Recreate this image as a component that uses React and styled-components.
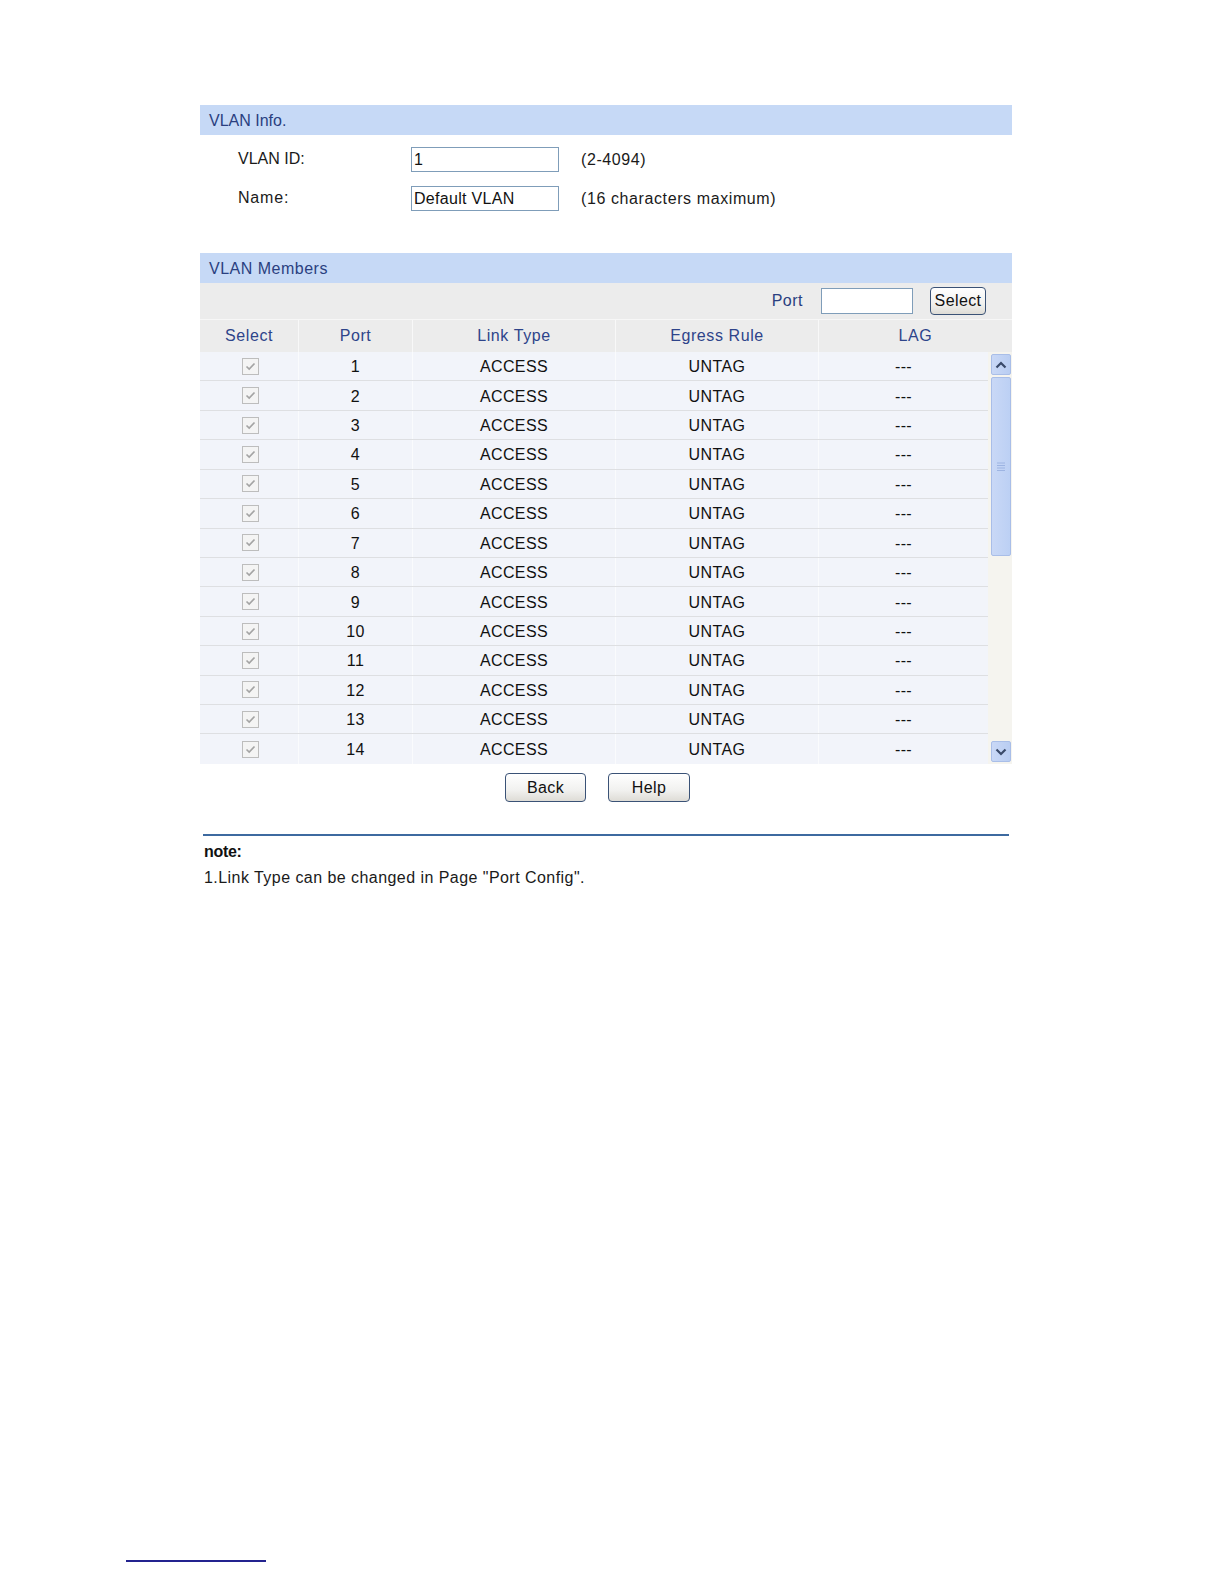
import styled, { createGlobalStyle } from 'styled-components'

const GlobalStyle = createGlobalStyle`
  html, body {
    margin: 0;
    padding: 0;
    background: #ffffff;
    font-family: "Liberation Sans", Arial, sans-serif;
  }
`

const Page = styled.div`
  padding-top: 105px;
  padding-bottom: 20px;
`

const Panel = styled.div`
  width: 812px;
  margin-left: 200px;
`

const SectionHeader = styled.div`
  height: 30px;
  line-height: 31px;
  padding-left: 9px;
  background: #c6d9f6;
  color: #2a3f80;
  font-size: 16px;
  letter-spacing: ${props => props.spacing || '0'};
`

const InfoForm = styled.div`
  padding: 5px 0 35px 38px;
`

const FormRow = styled.div`
  display: flex;
  align-items: center;
  height: 39px;
`

const Label = styled.div`
  width: 173px;
  font-size: 16px;
  color: #1a1a1a;
  margin-top: -2px;
  letter-spacing: ${props => props.spacing || '0'};
`

const TextBox = styled.div`
  box-sizing: border-box;
  width: ${props => props.width || '148px'};
  height: ${props => props.height || '25px'};
  border: 1px solid #7f9db9;
  background: #ffffff;
  font-size: 16px;
  line-height: 23px;
  padding-left: 2px;
  color: #111;
  letter-spacing: 0.3px;
`

const Hint = styled.div`
  margin-left: 22px;
  font-size: 16px;
  color: #1a1a1a;
  letter-spacing: 0.6px;
`

const Toolbar = styled.div`
  height: 36px;
  background: #ececec;
  display: flex;
  align-items: center;
  justify-content: flex-end;
  padding-right: 26px;
`

const ToolLabel = styled.div`
  font-size: 16px;
  color: #2a3f80;
  margin-right: 18px;
  letter-spacing: 0.5px;
`

const Button = styled.div`
  box-sizing: border-box;
  width: ${props => props.width};
  height: ${props => props.height || '29px'};
  border: 1px solid #3a5276;
  border-radius: 4px;
  background: linear-gradient(#ffffff, #f1f1ef 60%, #dedcd6);
  font-size: 16px;
  color: #111;
  letter-spacing: 0.4px;
  display: flex;
  align-items: center;
  justify-content: center;
  margin-left: ${props => props.gap || '0'};
`

const HeadRow = styled.div`
  display: grid;
  grid-template-columns: 99px 114px 203px 203px 193px;
  height: 33px;
  background: #ececec;
  border-top: 1px solid #f7f7f7;
  box-sizing: border-box;
`

const HeadCell = styled.div`
  display: flex;
  align-items: center;
  justify-content: center;
  font-size: 16px;
  color: #2e448a;
  letter-spacing: 0.6px;
  border-right: 1px solid #f8f8f8;
  &:last-child {
    border-right: none;
  }
`

const Body = styled.div`
  display: flex;
  height: 412px;
  overflow: hidden;
`

const Rows = styled.div`
  width: 788px;
`

const Row = styled.div`
  display: grid;
  grid-template-columns: 99px 114px 203px 203px 169px;
  height: 29.43px;
  box-sizing: border-box;
  background: #f2f4fa;
  border-bottom: 1px solid #dedfe2;
  &:last-child {
    border-bottom: none;
  }
`

const Cell = styled.div`
  display: flex;
  align-items: center;
  justify-content: center;
  font-size: 16px;
  color: #111;
  letter-spacing: 0.4px;
  padding-top: 2px;
  border-right: 1px solid #fafbfd;
  &:last-child {
    border-right: none;
  }
`

const CheckBox = styled.span`
  box-sizing: border-box;
  width: 17px;
  height: 17px;
  margin: -2px 0 0 2px;
  border: 1px solid #bdbdbd;
  background: #f4f4f4;
  display: flex;
  align-items: center;
  justify-content: center;
`

const ScrollBar = styled.div`
  width: 24px;
  background: #f5f4ef;
  display: flex;
  flex-direction: column;
  align-items: center;
  padding: 2px 0 2px 2px;
  box-sizing: border-box;
`

const ScrollButton = styled.div`
  box-sizing: border-box;
  width: 20px;
  height: 21px;
  border: 1px solid #a9bee8;
  border-radius: 2px;
  background: linear-gradient(90deg, #c9d8f6, #b9cdf2);
  display: flex;
  align-items: center;
  justify-content: center;
`

const Thumb = styled.div`
  box-sizing: border-box;
  width: 20px;
  height: 179px;
  margin-top: 2px;
  border: 1px solid #a9bee8;
  border-radius: 2px;
  background: linear-gradient(90deg, #c9d8f6, #bcd0f4);
  display: flex;
  align-items: center;
  justify-content: center;
`

const Track = styled.div`
  flex: 1;
`

const ButtonBar = styled.div`
  display: flex;
  padding: 9px 0 0 305px;
  height: 70px;
  box-sizing: border-box;
`

const NoteArea = styled.div`
  margin: 0 3px;
  border-top: 2px solid #3d6aa0;
  padding-top: 7px;
`

const NoteTitle = styled.div`
  font-size: 16px;
  font-weight: bold;
  color: #111;
  padding-left: 1px;
  letter-spacing: -0.3px;
`

const NoteText = styled.div`
  font-size: 16px;
  color: #1a1a1a;
  margin-top: 8px;
  padding-left: 1px;
  letter-spacing: 0.45px;
`

const FootLine = styled.div`
  width: 140px;
  margin: 673px 0 0 126px;
  border-top: 2px solid #23238f;
`

const Chevron = ({ down }) => (
  <svg width="12" height="8" viewBox="0 0 12 8">
    <path
      d={down ? 'M1.5 1.5 L6 6 L10.5 1.5' : 'M1.5 6.5 L6 2 L10.5 6.5'}
      fill="none"
      stroke="#3a4a6a"
      strokeWidth="2.2"
    />
  </svg>
)

const Grip = () => (
  <svg width="8" height="9" viewBox="0 0 8 9">
    {[1, 3.5, 6, 8.5].map(y => (
      <line key={y} x1="0" x2="8" y1={y} y2={y} stroke="#9db4e2" strokeWidth="1" />
    ))}
  </svg>
)

const Check = () => (
  <svg width="11" height="9" viewBox="0 0 11 9">
    <path d="M1.5 4.5 L4.2 7 L9.5 1.5" fill="none" stroke="#a4a4a4" strokeWidth="1.7" />
  </svg>
)

const ports = Array.from({ length: 14 }, (_, i) => i + 1)

const App = () => {
  return (
    <Page>
      <GlobalStyle />
      <Panel>
        <SectionHeader>VLAN Info.</SectionHeader>
        <InfoForm>
          <FormRow>
            <Label>VLAN ID:</Label>
            <TextBox>1</TextBox>
            <Hint>(2-4094)</Hint>
          </FormRow>
          <FormRow>
            <Label spacing="0.8px">Name:</Label>
            <TextBox>Default VLAN</TextBox>
            <Hint>(16 characters maximum)</Hint>
          </FormRow>
        </InfoForm>

        <SectionHeader spacing="0.5px">VLAN Members</SectionHeader>
        <Toolbar>
          <ToolLabel>Port</ToolLabel>
          <TextBox width="92px" height="26px"></TextBox>
          <Button width="56px" height="28px" gap="17px">Select</Button>
        </Toolbar>
        <HeadRow>
          <HeadCell>Select</HeadCell>
          <HeadCell>Port</HeadCell>
          <HeadCell>Link Type</HeadCell>
          <HeadCell>Egress Rule</HeadCell>
          <HeadCell>LAG</HeadCell>
        </HeadRow>
        <Body>
          <Rows>
            {ports.map(port => (
              <Row key={port}>
                <Cell>
                  <CheckBox>
                    <Check />
                  </CheckBox>
                </Cell>
                <Cell>{port}</Cell>
                <Cell>ACCESS</Cell>
                <Cell>UNTAG</Cell>
                <Cell>---</Cell>
              </Row>
            ))}
          </Rows>
          <ScrollBar>
            <ScrollButton>
              <Chevron />
            </ScrollButton>
            <Thumb>
              <Grip />
            </Thumb>
            <Track />
            <ScrollButton>
              <Chevron down />
            </ScrollButton>
          </ScrollBar>
        </Body>
        <ButtonBar>
          <Button width="81px">Back</Button>
          <Button width="82px" gap="22px">Help</Button>
        </ButtonBar>
        <NoteArea>
          <NoteTitle>note:</NoteTitle>
          <NoteText>1.Link Type can be changed in Page "Port Config".</NoteText>
        </NoteArea>
      </Panel>
      <FootLine />
    </Page>
  )
}

export default App
